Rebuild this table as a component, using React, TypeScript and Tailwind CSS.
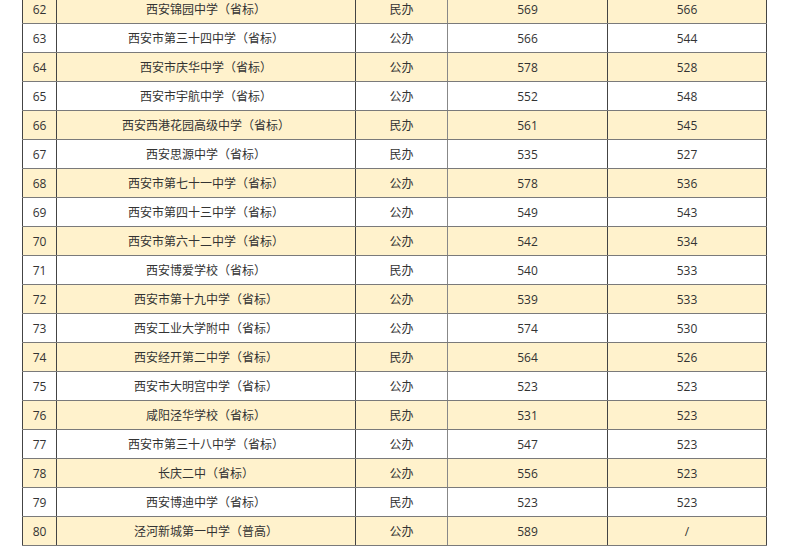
const rows: [string, string, string, string, string][] = [
  ['62', '西安锦园中学（省标）', '民办', '569', '566'],
  ['63', '西安市第三十四中学（省标）', '公办', '566', '544'],
  ['64', '西安市庆华中学（省标）', '公办', '578', '528'],
  ['65', '西安市宇航中学（省标）', '公办', '552', '548'],
  ['66', '西安西港花园高级中学（省标）', '民办', '561', '545'],
  ['67', '西安思源中学（省标）', '民办', '535', '527'],
  ['68', '西安市第七十一中学（省标）', '公办', '578', '536'],
  ['69', '西安市第四十三中学（省标）', '公办', '549', '543'],
  ['70', '西安市第六十二中学（省标）', '公办', '542', '534'],
  ['71', '西安博爱学校（省标）', '民办', '540', '533'],
  ['72', '西安市第十九中学（省标）', '公办', '539', '533'],
  ['73', '西安工业大学附中（省标）', '公办', '574', '530'],
  ['74', '西安经开第二中学（省标）', '民办', '564', '526'],
  ['75', '西安市大明宫中学（省标）', '公办', '523', '523'],
  ['76', '咸阳泾华学校（省标）', '民办', '531', '523'],
  ['77', '西安市第三十八中学（省标）', '公办', '547', '523'],
  ['78', '长庆二中（省标）', '公办', '556', '523'],
  ['79', '西安博迪中学（省标）', '民办', '523', '523'],
  ['80', '泾河新城第一中学（普高）', '公办', '589', '/'],
];

export default function App() {
  return (
    <div className="h-[558px] w-[793px] overflow-hidden bg-white pl-[22px]">
      <table
        className="-mt-[6px] w-[744px] table-fixed border-collapse text-[12px] text-[#333]"
        style={{ fontFamily: '"Open Sans", "Noto Sans CJK SC", sans-serif' }}
      >
        <colgroup>
          <col className="w-[34px]" />
          <col className="w-[299px]" />
          <col className="w-[92px]" />
          <col className="w-[160px]" />
          <col className="w-[159px]" />
        </colgroup>
        <tbody>
          {rows.map((r, i) => (
            <tr key={r[0]} className={`h-[29px] ${i % 2 === 0 ? 'bg-[#fff2cc]' : 'bg-white'}`}>
              <td className="border border-[#444] border-y-[#7a7a7a] p-0 pt-px text-center">{r[0]}</td>
              <td className="border border-[#444] border-y-[#7a7a7a] p-0 pt-px text-center">{r[1]}</td>
              <td className="border border-[#888] border-y-[#7a7a7a] p-0 pt-px text-center">{r[2]}</td>
              <td className="border border-[#444] border-y-[#7a7a7a] p-0 pt-px text-center">{r[3]}</td>
              <td className="border border-[#444] border-y-[#7a7a7a] p-0 pt-px text-center">{r[4]}</td>
            </tr>
          ))}
        </tbody>
      </table>
    </div>
  );
}
